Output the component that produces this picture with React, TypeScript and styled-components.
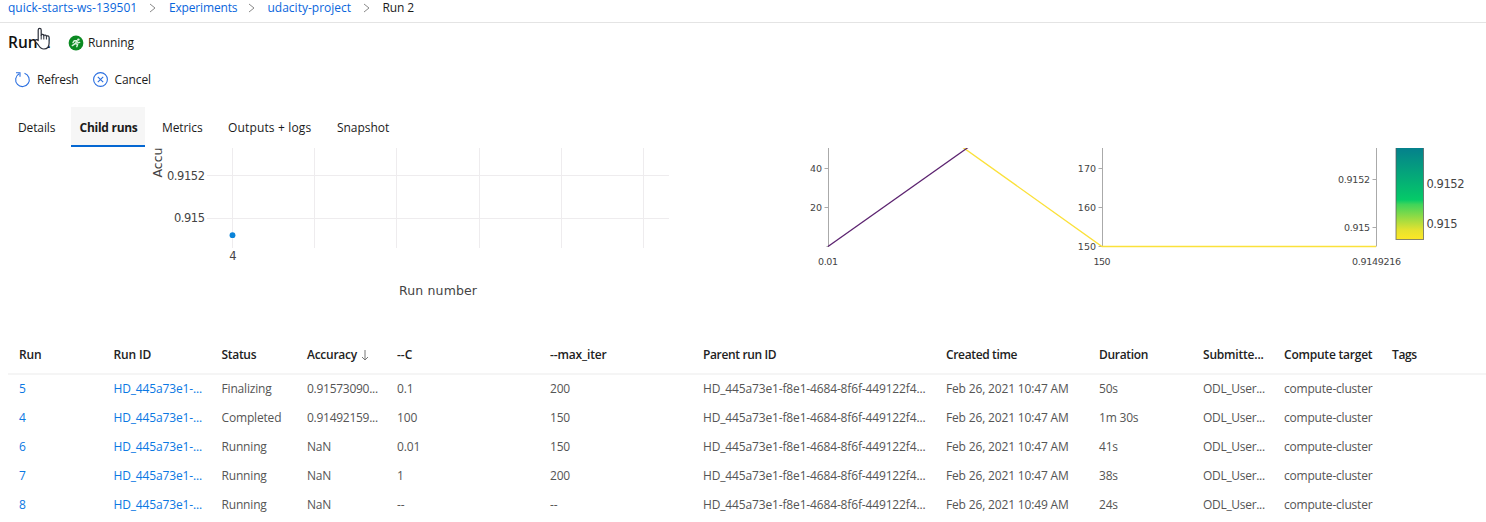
import React from 'react';
import styled, { createGlobalStyle } from 'styled-components';

const GlobalStyle = createGlobalStyle`
  * { box-sizing: border-box; }
  body {
    margin: 0;
    background: #fff;
    color: #1b1b1b;
    font-family: 'Open Sans', 'Noto Sans', sans-serif;
    font-size: 12px;
    overflow: hidden;
  }
`;

const Page = styled.div`
  position: relative;
  display: flex;
  flex-direction: column;
  width: 1486px;
  height: 522px;
  overflow: hidden;
`;

const Breadcrumb = styled.nav`
  display: flex;
  align-items: center;
  height: 23px;
  padding: 0 8px 6px;
  border-bottom: 1px solid #e4e4e4;
`;

const Crumb = styled.span<{ $w: number; $ls?: number; $current?: boolean }>`
  width: ${(p) => p.$w}px;
  white-space: nowrap;
  line-height: 16px;
  letter-spacing: ${(p) => p.$ls ?? 0}px;
  color: ${(p) => (p.$current ? '#1b1b1b' : '#0a66dc')};
`;

const Separator = styled.svg`
  width: 8px;
  height: 10px;
  margin: 0 12px;
  fill: none;
  stroke: #8a8a8a;
`;

const TitleRow = styled.header`
  display: flex;
  align-items: center;
  height: 39px;
  padding-left: 8px;
`;

const Title = styled.h1`
  width: 60px;
  margin: -2px 0 0;
  font-size: 15.5px;
  font-weight: 600;
  line-height: 20px;
  white-space: nowrap;
  color: #111;
`;

const StatusIcon = styled.svg`
  width: 16px;
  height: 16px;
  margin-right: 4px;
`;

const Label = styled.span<{ $ls?: number }>`
  white-space: nowrap;
  line-height: 16px;
  letter-spacing: ${(p) => p.$ls ?? 0}px;
`;

const Toolbar = styled.div`
  display: flex;
  align-items: center;
  height: 34px;
  padding: 1px 0 0 14px;
`;

const Command = styled.button<{ $w: number }>`
  display: flex;
  align-items: center;
  gap: 6px;
  width: ${(p) => p.$w}px;
  padding: 0;
  border: 0;
  background: none;
  color: inherit;
  font: inherit;
`;

const CommandIcon = styled.svg`
  flex: none;
  width: 17px;
  height: 17px;
  fill: none;
  stroke: #2b6fe0;
  stroke-width: 1.1;
`;

const Tabs = styled.div`
  display: flex;
  height: 40px;
  margin-top: 11px;
`;

const Tab = styled.div<{ $w: number; $indent: number; $ls?: number; $active?: boolean }>`
  display: flex;
  align-items: center;
  width: ${(p) => p.$w}px;
  padding: 2px 0 0 ${(p) => p.$indent}px;
  white-space: nowrap;
  letter-spacing: ${(p) => p.$ls ?? 0}px;
  font-weight: ${(p) => (p.$active ? 700 : 400)};
  background: ${(p) => (p.$active ? '#f6f6f6' : 'transparent')};
  border-bottom: 2px solid ${(p) => (p.$active ? '#0467d2' : 'transparent')};
`;

const Charts = styled.section`
  display: flex;
  height: 188px;
  padding-top: 1px;
`;

const Chart = styled.svg`
  display: block;
  flex: none;
  font-family: 'DejaVu Sans', Verdana, sans-serif;
  fill: #444;
`;

const Table = styled.div`
  display: flex;
  flex-direction: column;
  margin-left: 8px;
`;

const Row = styled.div<{ $head?: boolean }>`
  display: grid;
  grid-template-columns: 94.5px 108px 85.5px 90px 153px 153px 243px 153px 104px 81px 108px 1fr;
  align-items: center;
  height: ${(p) => (p.$head ? '40px' : '28.8px')};
  padding: ${(p) => (p.$head ? '2px 0 0 11px' : '0 0 0 11px')};
  color: ${(p) => (p.$head ? '#222' : '#555')};
  font-weight: ${(p) => (p.$head ? 600 : 400)};
  border-bottom: ${(p) => (p.$head ? '2px solid #f5f5f5' : '0')};
`;

const Cell = styled.span<{ $link?: boolean; $ls?: number }>`
  display: flex;
  align-items: center;
  white-space: nowrap;
  line-height: 16px;
  letter-spacing: ${(p) => p.$ls ?? 0}px;
  color: ${(p) => (p.$link ? '#0b78e3' : 'inherit')};
`;

const SortArrow = styled.svg`
  width: 8px;
  height: 12px;
  margin-left: 4px;
  fill: none;
  stroke: #777;
`;

const Pointer = styled.svg`
  position: absolute;
  left: 34px;
  top: 26px;
  width: 18px;
  height: 25px;
`;

const Chevron = () => (
  <Separator viewBox="0 0 8 10">
    <path d="M1 1l5 4-5 4" />
  </Separator>
);

type Column = { title: string; ls: number; cellLs: number };

const columns: Column[] = [
  { title: 'Run', ls: -0.2, cellLs: 0 },
  { title: 'Run ID', ls: -0.15, cellLs: -0.15 },
  { title: 'Status', ls: -0.3, cellLs: -0.17 },
  { title: 'Accuracy', ls: -0.26, cellLs: -0.27 },
  { title: '--C', ls: 0, cellLs: -0.13 },
  { title: '--max_iter', ls: -0.15, cellLs: -0.2 },
  { title: 'Parent run ID', ls: -0.36, cellLs: -0.15 },
  { title: 'Created time', ls: -0.35, cellLs: -0.16 },
  { title: 'Duration', ls: -0.3, cellLs: -0.2 },
  { title: 'Submitte...', ls: -0.2, cellLs: -0.3 },
  { title: 'Compute target', ls: -0.22, cellLs: -0.2 },
  { title: 'Tags', ls: -0.4, cellLs: 0 },
];

const parent = 'HD_445a73e1-f8e1-4684-8f6f-449122f4...';
const run = (n: string, status: string, acc: string, c: string, iter: string, time: string, dur: string) => [
  n, 'HD_445a73e1-...', status, acc, c, iter, parent, `Feb 26, 2021 ${time} AM`, dur, 'ODL_User...', 'compute-cluster', '',
];

const rows = [
  run('5', 'Finalizing', '0.91573090...', '0.1', '200', '10:47', '50s'),
  run('4', 'Completed', '0.91492159...', '100', '150', '10:47', '1m 30s'),
  run('6', 'Running', 'NaN', '0.01', '150', '10:47', '41s'),
  run('7', 'Running', 'NaN', '1', '200', '10:47', '38s'),
  run('8', 'Running', 'NaN', '--', '--', '10:49', '24s'),
];

const AccuracyChart = () => (
  <Chart width="743" height="187" viewBox="0 148 743 187" fontSize="11.5">
    <g stroke="#eeecee" strokeWidth="1">
      {[232.5, 314.5, 396.5, 479.5, 561.5, 643.5].map((x) => (
        <path key={x} d={`M${x} 148V248`} />
      ))}
      <path d="M207 175.5H669M207 218.5H669" />
    </g>
    <text x="205" y="180" textAnchor="end" textLength="38">0.9152</text>
    <text x="205" y="222" textAnchor="end" textLength="31">0.915</text>
    <circle cx="232.5" cy="235.2" r="2.9" fill="#0a83d8" />
    <text x="233" y="260" textAnchor="middle">4</text>
    <text transform="translate(162 177.5) rotate(-90)" fontSize="12.5">Accuracy</text>
    <text x="399" y="295" textLength="78" fontSize="12.5">Run number</text>
  </Chart>
);

const ParallelChart = () => (
  <Chart width="743" height="187" viewBox="743 148 743 187" fontSize="9.5">
    <defs>
      <linearGradient id="scale" x1="0" x2="0" y1="0" y2="1">
        <stop offset="0" stopColor="#057f8d" />
        <stop offset="0.57" stopColor="#05ca68" />
        <stop offset="0.62" stopColor="#3fd45a" />
        <stop offset="0.9" stopColor="#e6e22f" />
        <stop offset="1" stopColor="#fde725" />
      </linearGradient>
    </defs>
    <g stroke="#aaa" fill="none">
      <path d="M828.5 148V246.5M824.5 168.5H828.5M824.5 207.5H828.5M826.5 246.5H829" />
      <path d="M1102.5 148V246.5M1098.5 168.5H1102.5M1098.5 207.5H1102.5M1098.5 246.5H1102.5" />
      <path d="M1376.5 148V246.5M1372.5 179.5H1376.5M1372.5 227.5H1376.5" />
    </g>
    <path d="M963 147.5L1102 246.5H1376" stroke="#fbe13b" strokeWidth="1.4" fill="none" />
    <path d="M828 246.5L968 147.5" stroke="#5c2370" strokeWidth="1.3" fill="none" />
    <g textAnchor="end">
      <text x="822" y="172">40</text>
      <text x="822" y="211">20</text>
      <text x="1096" y="172">170</text>
      <text x="1096" y="211">160</text>
      <text x="1096" y="249.5">150</text>
      <text x="1370" y="183" textLength="32">0.9152</text>
      <text x="1370" y="231" textLength="26">0.915</text>
    </g>
    <g textAnchor="middle">
      <text x="828" y="265" textLength="20">0.01</text>
      <text x="1102" y="265" textLength="17">150</text>
      <text x="1376.5" y="265" textLength="49">0.9149216</text>
    </g>
    <rect x="1396" y="147" width="27.5" height="92.5" fill="url(#scale)" stroke="#555" strokeOpacity="0.7" />
    <g fontSize="11.5">
      <text x="1426.5" y="187.5" textLength="38">0.9152</text>
      <text x="1426.5" y="228" textLength="31">0.915</text>
    </g>
  </Chart>
);

export default function App() {
  return (
    <Page>
      <GlobalStyle />
      <Breadcrumb>
        <Crumb $w={129}>quick-starts-ws-139501</Crumb>
        <Chevron />
        <Crumb $w={66.5} $ls={-0.17}>Experiments</Crumb>
        <Chevron />
        <Crumb $w={83}>udacity-project</Crumb>
        <Chevron />
        <Crumb $w={34} $ls={-0.1} $current>Run 2</Crumb>
      </Breadcrumb>
      <TitleRow>
        <Title>Run 2</Title>
        <StatusIcon viewBox="0 0 16 16">
          <circle cx="8" cy="8" r="7.4" fill="#0b8a22" />
          <g fill="none" stroke="#d9f2dc" strokeWidth="1.4" strokeLinecap="round" strokeLinejoin="round">
            <path d="M5 7.600L6.300 5.600 8.800 5.700M9.200 5.900L7.200 8.600 4.300 10.600M7.600 8.500l2 1-.8 2.200M9.200 6.700l1 1 1.500-.3" />
          </g>
          <circle cx="10.400" cy="4.600" r="1.200" fill="#d9f2dc" />
        </StatusIcon>
        <Label $ls={-0.05}>Running</Label>
      </TitleRow>
      <Toolbar>
        <Command $w={77.5}>
          <CommandIcon viewBox="0 0 17 17">
            <path d="M10.5 2.300a6.800 6.800 0 1 1-5.300.5" />
            <path d="M2 1.800h4v4" />
          </CommandIcon>
          <Label $ls={-0.2}>Refresh</Label>
        </Command>
        <Command $w={70}>
          <CommandIcon viewBox="0 0 17 17">
            <circle cx="8.500" cy="8.500" r="6.900" />
            <path d="M5.800 5.800l5.400 5.400M11.200 5.800l-5.400 5.400" />
          </CommandIcon>
          <Label $ls={-0.1}>Cancel</Label>
        </Command>
      </Toolbar>
      <Tabs>
        <Tab $w={71} $indent={18} $ls={-0.12}>Details</Tab>
        <Tab $w={74} $indent={8.5} $ls={-0.27} $active>Child runs</Tab>
        <Tab $w={74} $indent={17} $ls={-0.1}>Metrics</Tab>
        <Tab $w={109} $indent={9} $ls={0.15}>Outputs + logs</Tab>
        <Tab $w={80} $indent={9} $ls={-0.05}>Snapshot</Tab>
      </Tabs>
      <Charts>
        <AccuracyChart />
        <ParallelChart />
      </Charts>
      <Table>
        <Row $head>
          {columns.map((c) => (
            <Cell key={c.title} $ls={c.ls}>
              {c.title}
              {c.title === 'Accuracy' && (
                <SortArrow viewBox="0 0 8 12">
                  <path d="M4 1v10M1 8l3 3 3-3" />
                </SortArrow>
              )}
            </Cell>
          ))}
        </Row>
        {rows.map((r) => (
          <Row key={r[0]}>
            {r.map((text, i) => (
              <Cell key={i} $link={i < 2} $ls={columns[i].cellLs}>{text}</Cell>
            ))}
          </Row>
        ))}
      </Table>
      <Pointer viewBox="0 0 18 25">
        <path
          d="M4.200 14.500V4c0-2.200 3-2.200 3 0v5.200c.4-1.300 2.600-1 2.600.5.500-1.100 2.600-.8 2.600.6.600-.9 2.700-.5 2.700 1.100v5.600c0 3.800-2.100 6-5.200 6-3 0-4.200-1.600-5.400-3.800L1.400 15.600c-.7-1.700 1.200-2.600 2.800-1.100z"
          fill="#fff" stroke="#2b2f3a" strokeWidth="1.200" strokeLinejoin="round"
        />
        <path d="M7.200 9v4.500M9.800 9.700v3.800M12.400 10.500v3" stroke="#2b2f3a" />
      </Pointer>
    </Page>
  );
}
